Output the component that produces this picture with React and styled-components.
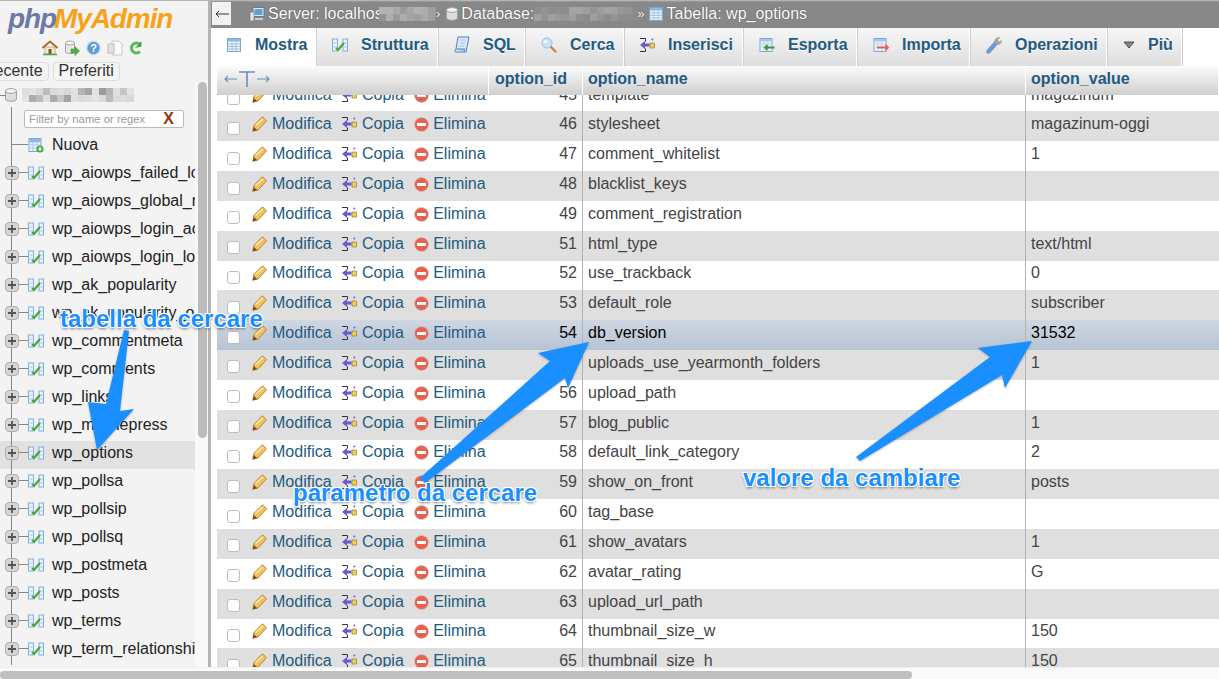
import React from "react";
import styled, { createGlobalStyle } from "styled-components";

const GlobalStyle = createGlobalStyle`
  html, body {
    margin: 0;
    padding: 0;
    background: #fff;
  }
  body {
    font-family: "Liberation Sans", Arial, sans-serif;
    font-size: 16px;
    color: #444;
    overflow: hidden;
  }
  * {
    box-sizing: border-box;
  }
`;

const Page = styled.div`
  position: relative;
  width: 1219px;
  height: 679px;
  overflow: hidden;
  display: flex;
  flex-direction: column;
`;
const Main = styled.div`
  display: flex;
  height: 667px;
  border-top: 1px solid #b5b5b5;
`;

/* sidebar */
const Sidebar = styled.aside`
  width: 208px;
  flex: none;
  display: flex;
  background: #f3f3f3;
`;
const SideColumn = styled.div`
  width: 195px;
  flex: none;
  overflow: hidden;
`;
const SideTrack = styled.div`
  flex: 1;
  margin-top: 81px;
  padding: 0 1px 0 3px;
  background: #f8f8f8;
`;
const SideThumb = styled.div`
  height: 356px;
  border-radius: 5px;
  background: #bcbcbc;
`;
const Handle = styled.div`
  width: 3px;
  flex: none;
  background: #b4b4b4;
`;
const Logo = styled.div`
  height: 33px;
  padding: 2px 0 0 8px;
  font-size: 28px;
  line-height: 31px;
  font-weight: 700;
  font-style: italic;
  letter-spacing: -1.1px;
  white-space: nowrap;
`;
const LogoPhp = styled.span`
  color: #6b79a6;
`;
const LogoName = styled.span`
  color: #f7a21b;
  margin-left: -2px;
`;
const NavIcons = styled.div`
  height: 28px;
  display: flex;
  align-items: center;
  gap: 6px;
  padding: 0 0 0 42px;
`;
const NavTabs = styled.div`
  display: flex;
  gap: 4px;
  margin-left: -23px;
  height: 19px;
`;
const NavTab = styled.div`
  padding: 0 5px;
  height: 19px;
  line-height: 16px;
  border: 1px solid #dcdcdc;
  border-radius: 4px;
  color: #333;
  background: #f4f4f4;
`;
const DbRow = styled.div`
  height: 26px;
  display: flex;
  align-items: center;
  padding-top: 2px;
`;
const DbLine = styled.div`
  width: 5px;
  height: 1px;
  background: #888;
`;
const DbName = styled.div`
  margin-left: 5px;
  display: flex;
`;
const Tree = styled.div`
  background: linear-gradient(#888, #888) 11px 0 / 1px 100% no-repeat;
`;
const FilterRow = styled.div`
  height: 26px;
  padding: 3px 10px 0 24px;
`;
const FilterBox = styled.div`
  display: flex;
  align-items: center;
  height: 18px;
  width: 160px;
  border: 1px solid #bbb;
  border-radius: 2px;
  background: #fff;
  padding: 0 9px 0 4px;
`;
const FilterInput = styled.input`
  flex: 1;
  min-width: 0;
  border: none;
  outline: none;
  padding: 0;
  background: none;
  font-family: inherit;
  font-size: 11.3px;
  &::placeholder {
    color: #9a9a9a;
    opacity: 1;
  }
`;
const FilterClear = styled.span`
  font-size: 16px;
  font-weight: 700;
  color: #8a3a10;
`;
const TreeItem = styled.div`
  height: 28px;
  display: flex;
  align-items: center;
  padding: 0 0 5px 5px;
  white-space: nowrap;
  color: #222;
  background-color: ${(p) => (p.$active ? "#e2e2e2" : "transparent")};
  background-image: linear-gradient(#888, #888);
  background-size: 1px 100%;
  background-position: 11px 0;
  background-repeat: no-repeat;
`;
const Expander = styled.span`
  width: 14px;
  height: 14px;
  flex: none;
  display: flex;
  align-items: center;
  justify-content: center;
  border-radius: 4px;
  background: #d6d6d6;
  border: 1px solid #aeaeae;
`;
const Connector = styled.span`
  flex: none;
  width: ${(p) => (p.$long ? "17px" : "9px")};
  margin-left: ${(p) => (p.$long ? "6px" : "0")};
  height: 1px;
  background: #888;
`;
const TreeLabel = styled.span`
  margin-left: 8px;
`;

/* content */
const Content = styled.main`
  flex: 1;
  min-width: 0;
  display: flex;
  flex-direction: column;
`;
const Breadcrumb = styled.div`
  height: 27px;
  flex: none;
  display: flex;
  align-items: center;
  background: #888;
  color: #fff;
  text-shadow: 0 0 1px #333;
  white-space: nowrap;
  padding-bottom: 3px;
  border-top: 1px solid #999;
`;
const BackButton = styled.div`
  width: 19px;
  height: 23px;
  margin: 0 18px 0 1px;
  display: flex;
  align-items: center;
  justify-content: center;
  background: #f2f2f2;
`;
const CrumbText = styled.span`
  margin-left: 3px;
  ${(p) => (p.$clip ? `width: ${p.$clip}px; overflow: hidden;` : "")}
`;
const Sep = styled.span`
  margin: 0 ${(p) => p.$right}px 0 ${(p) => p.$left}px;
  font-size: 13px;
`;
const TabBar = styled.nav`
  height: 38px;
  flex: none;
  display: flex;
  background: #fff;
`;
const Tab = styled.div`
  display: flex;
  align-items: center;
  gap: 13px;
  padding: 0 10px 4px 15px;
  font-weight: 700;
  color: #235a81;
  text-shadow: 0 1px 0 #fff;
  background: ${(p) =>
    p.$active ? "#fff" : "linear-gradient(#f6f6f6, #dedede)"};
  border-right: 1px solid #cfcfcf;
  box-shadow: inset -1px 0 0 #fff;
  white-space: nowrap;
  width: ${(p) => p.$width}px;
`;
const TableArea = styled.div`
  flex: 1;
  min-height: 0;
  overflow: hidden;
  padding-left: 6px;
`;
const TableHead = styled.div`
  position: relative;
  z-index: 1;
  display: grid;
  grid-template-columns: 272px 94px 443px 1fr;
  height: 29px;
  background: linear-gradient(#fbfbfb, #cfcfcf);
  font-weight: 700;
  color: #235a81;
`;
const HeadCell = styled.div`
  padding: 1px 0 5px ${(p) => p.$pad || 5}px;
  display: flex;
  align-items: center;
  box-shadow: inset -1px 0 0 #fff;
`;
const TableBody = styled.div`
  margin-top: -13.4px;
`;
const Row = styled.div`
  display: grid;
  grid-template-columns: 272px 94px 443px 1fr;
  height: 29.83px;
  background: ${(p) =>
    p.$marked
      ? "linear-gradient(#cfd7e2, #b6c4d4)"
      : p.$even
      ? "#dfdfdf"
      : "#fff"};
  color: ${(p) => (p.$marked ? "#000" : "#444")};
`;
const ActionCell = styled.div`
  display: flex;
  align-items: center;
  padding: 0 0 4px 10px;
  white-space: nowrap;
`;
const Check = styled.span`
  width: 13px;
  height: 13px;
  flex: none;
  margin: 8px 12px 0 0;
  background: #fff;
  border: 1px solid #bdbdbd;
  border-radius: 3px;
`;
const Action = styled.span`
  display: flex;
  align-items: center;
  gap: ${(p) => p.$gap || 5}px;
  margin-right: 10.4px;
  color: #235a81;
`;
const Cell = styled.div`
  display: flex;
  align-items: center;
  padding: 0 0 4px 5px;
  white-space: nowrap;
  overflow: hidden;
  justify-content: ${(p) => (p.$right ? "flex-end" : "flex-start")};
  padding-right: ${(p) => (p.$right ? "5px" : "0")};
  border-right: ${(p) => (p.$line ? "1px solid #b3b3b3" : "none")};
`;

/* bottom scrollbar */
const BottomBar = styled.div`
  height: 12px;
  flex: none;
  padding-top: 3px;
  background: #f9f9f9;
  border-top: 1px solid #eee;
`;
const BottomThumb = styled.div`
  width: 912px;
  height: 8px;
  border-radius: 4px;
  background: #bfbfbf;
`;

/* screenshot annotations */
const ArrowLayer = styled.svg`
  position: absolute;
  left: 0;
  top: 0;
  pointer-events: none;
  filter: drop-shadow(0 1px 1px rgba(0, 0, 0, 0.25));
`;
const Callout = styled.div`
  position: absolute;
  left: ${(p) => p.$x}px;
  top: ${(p) => p.$y}px;
  font-size: 24px;
  line-height: 28px;
  font-weight: 700;
  color: #1a8fff;
  white-space: nowrap;
  text-shadow: 1px 0 0 #fff, -1px 0 0 #fff, 0 1px 0 #fff, 0 -1px 0 #fff,
    1px 1px 0 #fff, -1px -1px 0 #fff, 1px -1px 0 #fff, -1px 1px 0 #fff,
    0 2px 3px rgba(0, 0, 0, 0.55);
`;

/* icons */
const Svg = ({ w = 16, h = 16, children }) => (
  <svg width={w} height={h} viewBox={`0 0 ${w} ${h}`} style={{ flex: "none" }}>
    {children}
  </svg>
);

const PencilIcon = () => (
  <Svg w={15} h={16}>
    <path d="M.8 15.3l1.2-6L10.5.8l4 4L6.3 13.8z" fill="#f2c25a" stroke="#b07c30" strokeWidth="0.9" />
    <path d="M3.5 9.5L11 2.8" stroke="#fde9ae" strokeWidth="1.6" />
    <path d="M.8 15.3l.9-4.4 3.6 3.4z" fill="#7a4a1a" />
  </Svg>
);
const CopyIcon = () => (
  <Svg w={15} h={16}>
    <path d="M0 1.5h5.5v3M5.5 11.5v3H0" fill="none" stroke="#333" strokeWidth="1" />
    <path d="M0 8l5-4v2.5h4.5v3H5V12z" fill="#6a5acd" />
    <rect x="10" y="6" width="4.5" height="5" fill="#f5d33c" stroke="#555" strokeWidth="0.5" />
    <circle cx="12.3" cy="2.5" r="1" fill="#5b6fd6" />
  </Svg>
);
const DeleteIcon = () => (
  <Svg w={15} h={16}>
    <circle cx="7.5" cy="8.5" r="7" fill="#e8604f" stroke="#cfc5bc" strokeWidth="0.7" />
    <rect x="3" y="7" width="9" height="3" fill="#fff" />
  </Svg>
);
const StructureIcon = () => (
  <Svg w={16} h={16}>
    <rect x="0.5" y="2" width="5" height="12" fill="#eaf3fb" stroke="#7fb0dc" />
    <rect x="11" y="2" width="4.5" height="12" fill="#eaf3fb" stroke="#7fb0dc" />
    <path d="M.5 6h5M.5 10h5M11 6h4.5M11 10h4.5" stroke="#a9cbe9" />
    <path d="M4 11l2 2 6-7" fill="none" stroke="#4ca23a" strokeWidth="2.2" />
  </Svg>
);
const NewTableIcon = () => (
  <Svg w={16} h={16}>
    <rect x="1" y="1.5" width="12" height="13" fill="#eef5fc" stroke="#7aa9d6" />
    <path d="M1 5h12M1 8h12M1 11h12M5 5v9M9 5v9" stroke="#a9c6e4" />
    <rect x="1.5" y="2" width="11" height="3" fill="#8db8e0" />
    <circle cx="12" cy="12" r="3.6" fill="#4fa747" />
    <path d="M10 12h4M12 10v4" stroke="#fff" strokeWidth="1.2" />
  </Svg>
);
const BrowseIcon = () => (
  <Svg w={16} h={16}>
    <rect x="1.5" y="1.5" width="13" height="13" fill="#e9f2fb" stroke="#7aa9d6" />
    <rect x="2" y="2" width="12" height="2.5" fill="#8db8e0" />
    <path d="M2 7h12M2 9.5h12M2 12h12M6 5v9M10 5v9" stroke="#a5c4e3" />
  </Svg>
);
const SqlIcon = () => (
  <Svg w={16} h={18}>
    <path d="M4 1h11l-3 15H2c-1.5 0-1.5-2 0-3z" fill="#dbe9f7" stroke="#4f83bd" />
    <path d="M2 13h9c-.8 1-.8 2-1 3" fill="#a9c9ea" stroke="#4f83bd" />
    <path d="M6 4h6M6 7h5M5 10h5" stroke="#a9c6e4" />
  </Svg>
);
const SearchIcon = () => (
  <Svg w={16} h={16}>
    <path d="M9.5 9.5l5 5" stroke="#c98a3c" strokeWidth="2.4" strokeLinecap="round" />
    <circle cx="6" cy="6" r="5" fill="#cfe3f6" stroke="#9cc0e2" />
    <circle cx="4.5" cy="4.5" r="1.8" fill="#f2f8fd" />
  </Svg>
);
const TransferIcon = ({ color, dir }) => (
  <Svg w={16} h={16}>
    <rect x="1" y="1.5" width="12" height="13" fill="#f0f5fb" stroke="#7aa9d6" />
    <rect x="1.5" y="2" width="11" height="2.5" fill="#a8c6e6" />
    <path d="M1 7h12M1 10h12M5 5v9M9 5v9" stroke="#bcd3ea" />
    <path
      d={dir === "left" ? "M15.5 10.5H6M8.5 8L6 10.5 8.5 13" : "M4 10.5h11M12.5 8l2.5 2.5-2.5 2.5"}
      fill="none"
      stroke={color}
      strokeWidth="1.8"
    />
  </Svg>
);
const WrenchIcon = () => (
  <Svg w={16} h={18}>
    <path d="M2.5 15.5L10 7" stroke="#6c9bd0" strokeWidth="4.4" strokeLinecap="round" />
    <path d="M9 7c-1-3 1-6 5-5.5L11.5 4l1.5 2 2.5-1.5C15.5 8 12.5 10 9 7z" fill="#a8a8a8" stroke="#8a8a8a" strokeWidth="0.5" />
  </Svg>
);
const TriangleIcon = () => (
  <Svg w={12} h={8}>
    <path d="M1 1h10L6 7z" fill="#888" stroke="#333" strokeWidth="0.8" />
  </Svg>
);
const HomeIcon = () => (
  <Svg w={16} h={16}>
    <path d="M3 7h10v7H3z" fill="#f4ead6" stroke="#b08a55" strokeWidth="0.6" />
    <path d="M0.5 8L8 1.5 15.5 8" fill="none" stroke="#b0702a" strokeWidth="2" />
    <rect x="6.5" y="9" width="3" height="5" fill="#7a5a30" />
    <path d="M1 14.5h14" stroke="#5da84a" strokeWidth="1.6" />
  </Svg>
);
const DbGoIcon = () => (
  <Svg w={16} h={16}>
    <path d="M1.5 3v9c0 2 9 2 9 0V3z" fill="#e8e8e8" stroke="#a5a5a5" />
    <ellipse cx="6" cy="3" rx="4.5" ry="2" fill="#f6f6f6" stroke="#a5a5a5" />
    <path d="M7 9h4V6.5L15.5 11 11 15.5V13H7z" fill="#5cab4a" stroke="#3d8a30" strokeWidth="0.5" />
  </Svg>
);
const HelpIcon = () => (
  <Svg w={15} h={16}>
    <circle cx="7.5" cy="8" r="6.6" fill="#5b9bd5" stroke="#b9d4ee" strokeWidth="1.2" />
    <text x="7.5" y="12" textAnchor="middle" fontSize="11" fontWeight="700" fill="#fff" fontFamily="Liberation Sans">?</text>
  </Svg>
);
const DocsIcon = () => (
  <Svg w={16} h={16}>
    <path d="M5 1h7l3 3v11H5z" fill="#fafafa" stroke="#c5c5c5" />
    <rect x="1" y="4" width="6" height="9" fill="#e2e2e2" stroke="#bdbdbd" />
  </Svg>
);
const ReloadIcon = () => (
  <Svg w={13} h={16}>
    <path d="M11 4.5A5 5 0 1 0 11 11.5" fill="none" stroke="#5cb85c" strokeWidth="3" />
    <path d="M6 8l6.5-1.5V1z" fill="#4aa34a" />
  </Svg>
);
const ServerIcon = () => (
  <Svg w={16} h={16}>
    <rect x="4" y="1.5" width="11" height="9" fill="#dfe9f4" stroke="#5f7f9f" />
    <rect x="5.5" y="3" width="8" height="6" fill="#5fa0d8" />
    <rect x="1" y="6" width="4" height="9" fill="#e5e5e5" stroke="#777" strokeWidth="0.7" />
    <path d="M6 13h8" stroke="#ccc" strokeWidth="2" />
  </Svg>
);
const CylinderIcon = ({ w = 12, h = 14 }) => (
  <Svg w={w} h={h}>
    <path d={`M.5 3v${h - 6}c0 3 ${w - 1} 3 ${w - 1} 0V3z`} fill="#dedede" stroke="#a0a0a0" />
    <ellipse cx={w / 2} cy="3" rx={w / 2 - 0.5} ry="2.4" fill="#f4f4f4" stroke="#a0a0a0" />
  </Svg>
);
const PlusGlyph = () => (
  <svg width="8" height="8" viewBox="0 0 8 8">
    <path d="M0 4h8M4 0v8" stroke="#555" strokeWidth="1.8" />
  </svg>
);
const BackArrow = () => (
  <svg width="14" height="8" viewBox="0 0 14 8">
    <path d="M14 4H1M4 1L1 4l3 3" fill="none" stroke="#333" />
  </svg>
);
const ResizeGlyph = () => (
  <svg width="48" height="20" viewBox="0 0 48 20">
    <path d="M2 10h12M5 7l-3 3 3 3M34 10h12M43 7l3 3-3 3" fill="none" stroke="#6a8db5" strokeWidth="1.1" />
    <path d="M16 3h16M24 3v15" fill="none" stroke="#6a8db5" strokeWidth="1.6" />
  </svg>
);

// mosaic used to hide names in the screenshot
const Mosaic = ({ width, height, cell = 7, dark, light, seed = 3 }) => {
  const cells = [];
  let v = seed;
  for (let y = 0; y < height; y += cell) {
    for (let x = 0; x < width; x += cell) {
      v = (v * 37 + 11) % 101;
      cells.push(
        <rect
          key={`${x}-${y}`}
          x={x}
          y={y}
          width={cell}
          height={cell}
          fill={v % 3 === 0 ? dark : light}
          opacity={0.45 + (v % 7) / 12}
        />
      );
    }
  }
  return (
    <svg width={width} height={height} style={{ flex: "none" }}>
      {cells}
    </svg>
  );
};

const tables = [
  "wp_aiowps_failed_logins",
  "wp_aiowps_global_meta",
  "wp_aiowps_login_activity",
  "wp_aiowps_login_lockdown",
  "wp_ak_popularity",
  "wp_ak_popularity_options",
  "wp_commentmeta",
  "wp_comments",
  "wp_links",
  "wp_mobilepress",
  "wp_options",
  "wp_pollsa",
  "wp_pollsip",
  "wp_pollsq",
  "wp_postmeta",
  "wp_posts",
  "wp_terms",
  "wp_term_relationships",
];

const tabs = [
  { label: "Mostra", icon: <BrowseIcon />, width: 106, active: true },
  { label: "Struttura", icon: <StructureIcon />, width: 122 },
  { label: "SQL", icon: <SqlIcon />, width: 87 },
  { label: "Cerca", icon: <SearchIcon />, width: 99 },
  { label: "Inserisci", icon: <CopyIcon />, width: 119 },
  { label: "Esporta", icon: <TransferIcon color="#3f9a35" dir="left" />, width: 114 },
  { label: "Importa", icon: <TransferIcon color="#e8604f" dir="right" />, width: 113 },
  { label: "Operazioni", icon: <WrenchIcon />, width: 137 },
  { label: "Più", icon: <TriangleIcon />, width: 75 },
];

const rows = [
  [45, "template", "magazinum"],
  [46, "stylesheet", "magazinum-oggi"],
  [47, "comment_whitelist", "1"],
  [48, "blacklist_keys", ""],
  [49, "comment_registration", ""],
  [51, "html_type", "text/html"],
  [52, "use_trackback", "0"],
  [53, "default_role", "subscriber"],
  [54, "db_version", "31532"],
  [55, "uploads_use_yearmonth_folders", "1"],
  [56, "upload_path", ""],
  [57, "blog_public", "1"],
  [58, "default_link_category", "2"],
  [59, "show_on_front", "posts"],
  [60, "tag_base", ""],
  [61, "show_avatars", "1"],
  [62, "avatar_rating", "G"],
  [63, "upload_url_path", ""],
  [64, "thumbnail_size_w", "150"],
  [65, "thumbnail_size_h", "150"],
];

const App = () => {
  return (
    <Page>
      <GlobalStyle />
      <Main>
        <Sidebar>
          <SideColumn>
            <Logo>
              <LogoPhp>php</LogoPhp>
              <LogoName>MyAdmin</LogoName>
            </Logo>
            <NavIcons>
              <HomeIcon />
              <DbGoIcon />
              <HelpIcon />
              <DocsIcon />
              <ReloadIcon />
            </NavIcons>
            <NavTabs>
              <NavTab>Recente</NavTab>
              <NavTab>Preferiti</NavTab>
            </NavTabs>
            <DbRow>
              <DbLine />
              <CylinderIcon />
              <DbName>
                <Mosaic width={112} height={14} cell={7} dark="#8d8d8d" light="#d6d6d6" seed={5} />
              </DbName>
            </DbRow>
            <Tree>
              <FilterRow>
                <FilterBox>
                  <FilterInput placeholder="Filter by name or regex" />
                  <FilterClear>X</FilterClear>
                </FilterBox>
              </FilterRow>
              <TreeItem>
                <Connector $long />
                <NewTableIcon />
                <TreeLabel>Nuova</TreeLabel>
              </TreeItem>
              {tables.map((name) => (
                <TreeItem key={name} $active={name === "wp_options"}>
                  <Expander>
                    <PlusGlyph />
                  </Expander>
                  <Connector />
                  <StructureIcon />
                  <TreeLabel>{name}</TreeLabel>
                </TreeItem>
              ))}
            </Tree>
          </SideColumn>
          <SideTrack>
            <SideThumb />
          </SideTrack>
        </Sidebar>
        <Handle />
        <Content>
          <Breadcrumb>
            <BackButton>
              <BackArrow />
            </BackButton>
            <ServerIcon />
            <CrumbText $clip={111}>Server: localhost</CrumbText>
            <Mosaic width={57} height={14} cell={7} dark="#a0a0a0" light="#b4b4b4" seed={9} />
            <Sep $left={0} $right={6}>›</Sep>
            <CylinderIcon />
            <CrumbText>Database:</CrumbText>
            <Mosaic width={103} height={14} cell={7} dark="#8f8f8f" light="#a4a4a4" seed={14} />
            <Sep $left={0} $right={3}>»</Sep>
            <BrowseIcon />
            <CrumbText>Tabella: wp_options</CrumbText>
          </Breadcrumb>
          <TabBar>
            {tabs.map((t) => (
              <Tab key={t.label} $active={t.active} $width={t.width}>
                {t.icon}
                {t.label}
              </Tab>
            ))}
          </TabBar>
          <TableArea>
            <TableHead>
              <HeadCell $pad={6}>
                <ResizeGlyph />
              </HeadCell>
              <HeadCell $pad={6}>option_id</HeadCell>
              <HeadCell>option_name</HeadCell>
              <HeadCell>option_value</HeadCell>
            </TableHead>
            <TableBody>
              {rows.map(([id, name, value], i) => (
                <Row key={id} $even={i % 2 === 1} $marked={id === 54}>
                  <ActionCell>
                    <Check />
                    <Action>
                      <PencilIcon />
                      Modifica
                    </Action>
                    <Action>
                      <CopyIcon />
                      Copia
                    </Action>
                    <Action $gap={4}>
                      <DeleteIcon />
                      Elimina
                    </Action>
                  </ActionCell>
                  <Cell $right $line>
                    {id}
                  </Cell>
                  <Cell $line>{name}</Cell>
                  <Cell>{value}</Cell>
                </Row>
              ))}
            </TableBody>
          </TableArea>
        </Content>
      </Main>
      <BottomBar>
        <BottomThumb />
      </BottomBar>

      <ArrowLayer width="1219" height="679">
        <g fill="#1a8fff">
          <polygon points="124,330 129,331 120,411 134,409 97,450 88,402 106,404" />
          <polygon points="420,478 425,483 565,378 568,388 589,342 538,353 550,361" />
          <polygon points="856,457 860,461 1002,375 1005,388 1032,341 978,348 990,357" />
        </g>
      </ArrowLayer>
      <Callout $x={60} $y={305}>tabella da cercare</Callout>
      <Callout $x={293} $y={479}>parametro da cercare</Callout>
      <Callout $x={743} $y={464}>valore da cambiare</Callout>
    </Page>
  );
};

export default App;
